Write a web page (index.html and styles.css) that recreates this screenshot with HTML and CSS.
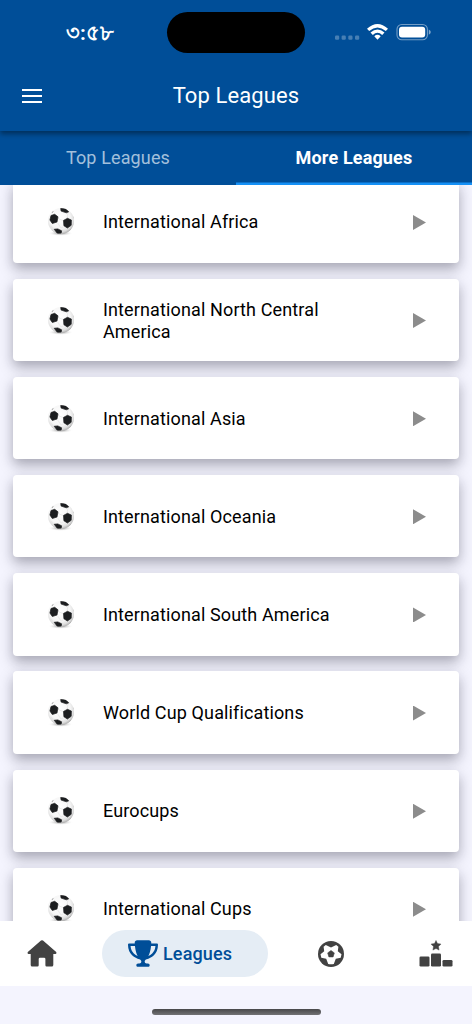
FILE: index.html
```html
<!DOCTYPE html>
<html lang="en">
<head>
<meta charset="utf-8">
<title>Top Leagues</title>
<link rel="stylesheet" href="styles.css">
</head>
<body>
<svg class="defs" width="0" height="0" aria-hidden="true">
  <defs>
    <radialGradient id="shade" cx=".45" cy=".38" r=".62">
      <stop offset="0" stop-color="#fff"/><stop offset=".65" stop-color="#f6f6f6"/><stop offset=".87" stop-color="#dedede"/><stop offset="1" stop-color="#b5b5b5"/>
    </radialGradient>
    <radialGradient id="ground"><stop offset="0" stop-color="#777"/><stop offset="1" stop-color="#fff" stop-opacity="0"/></radialGradient>
    <clipPath id="round"><circle cx="14" cy="14" r="13"/></clipPath>
  </defs>
  <symbol id="ball" viewBox="0 0 28 30">
    <ellipse cx="13.500" cy="26.300" rx="12.500" ry="2.700" fill="url(#ground)"/>
    <circle cx="14" cy="14" r="13" fill="url(#shade)"/>
    <g clip-path="url(#round)">
      <path d="M10 15l4 6M14 21l4-2M10 11l7 3M20 12l1-7M8 24l-4-5" stroke="#e4e4e4" stroke-width=".7" fill="none"/>
      <g fill="#1c1e20" stroke="#1c1e20" stroke-width=".7" stroke-linejoin="round">
        <path d="M13.700 1.400 18.500 1.800l3.200 3-2.400 1-5.200-1.700z"/>
        <path d="M4 8.500 7.700 7.300l3.300 2.500-1 5.200-4.700 1.500-2.400-3.500z"/>
        <path d="M16.500 13.400 20.500 11.300l3.900 1.800-.2 5.200-3.800 2.700-3.500-2.300z"/>
        <path d="M7.200 22.300l3.600-.4 3.800 1.900-.4 2.300-3.800.3z"/>
      </g>
      <path d="M4.500 5.500 6.500 3.800 6 5.500zM22.500 24l1.200-1.800 1.200-.8zM26 8l1.500 3-.6.500z" fill="#777"/>
    </g>
  </symbol>
</svg>
<div class="screen">
  <header class="header">
    <div class="status">
      <span class="time" lang="bn">৩:৫৮</span>
      <span class="island"></span>
      <svg class="signals" viewBox="0 0 98 24" fill="#fff">
        <g opacity=".28"><rect x="0" y="14.500" width="4.200" height="4.200" rx="1.200"/><rect x="6.600" y="14.500" width="4.200" height="4.200" rx="1.200"/><rect x="13.300" y="14.500" width="4.200" height="4.200" rx="1.200"/><rect x="20" y="14.500" width="4.200" height="4.200" rx="1.200"/></g>
        <path d="M32 7.800Q42.500-1.800 53 7.800l-2.200 2.200Q42.500 2.900 34.200 10zM35.500 11.600q7-6.400 14 0l-2.300 2.300q-4.700-4.100-9.400 0zM39.300 15.300q3.200-2.900 6.400 0L42.500 18.800z"/>
        <rect x="62" y="3.500" width="30.400" height="15.200" rx="4.800" fill="none" stroke="#fff" stroke-opacity=".45" stroke-width="1.100"/>
        <rect x="64" y="5.800" width="26.200" height="10.700" rx="3"/>
        <path d="M93.800 8.500q2 1 2 2.600t-2 2.600z" opacity=".5"/>
      </svg>
    </div>
    <div class="appbar">
      <svg class="menu" viewBox="0 0 20 14" fill="#fff"><path d="M0 0h20v2H0zM0 6h20v2H0zM0 12h20v2H0z"/></svg>
      <h1 class="title">Top Leagues</h1>
    </div>
  </header>
  <nav class="tabs">
    <span class="tab">Top Leagues</span>
    <span class="tab tab-active">More Leagues</span>
  </nav>
  <main class="list">
    <div class="card"><svg class="ball"><use href="#ball"/></svg><span class="name">International Africa</span><i class="arrow"></i></div>
    <div class="card"><svg class="ball"><use href="#ball"/></svg><span class="name">International North Central America</span><i class="arrow"></i></div>
    <div class="card"><svg class="ball"><use href="#ball"/></svg><span class="name">International Asia</span><i class="arrow"></i></div>
    <div class="card"><svg class="ball"><use href="#ball"/></svg><span class="name">International Oceania</span><i class="arrow"></i></div>
    <div class="card"><svg class="ball"><use href="#ball"/></svg><span class="name">International South America</span><i class="arrow"></i></div>
    <div class="card"><svg class="ball"><use href="#ball"/></svg><span class="name">World Cup Qualifications</span><i class="arrow"></i></div>
    <div class="card"><svg class="ball"><use href="#ball"/></svg><span class="name">Eurocups</span><i class="arrow"></i></div>
    <div class="card"><svg class="ball"><use href="#ball"/></svg><span class="name">International Cups</span><i class="arrow"></i></div>
  </main>
  <nav class="bottom">
    <svg class="home" viewBox="0 0 30 27" fill="#424242"><path d="M14 .6q1-.9 2 0L29.200 12q.7 1.600-.8 1.900H26.300V25q0 1.500-1.500 1.500H19.600q-1.200 0-1.200-1.300V19q0-1.300-1.300-1.300H13q-1.300 0-1.300 1.300v6.200q0 1.300-1.200 1.300H5.200Q3.700 26.500 3.700 25V13.900H1.600Q.1 13.600.8 12z"/></svg>
    <div class="pill">
      <svg class="cup" viewBox="0 0 576 512" fill="#004e98"><path d="M400 0H176c-26.500 0-48.100 21.800-47.100 48.200.2 5.300.4 10.600.7 15.800H24C10.700 64 0 74.700 0 88c0 92.600 33.500 157 78.500 200.700 44.300 43.100 98.300 64.800 138.100 75.800 23.400 6.500 39.400 26 39.400 45.600 0 20.900-17 37.900-37.900 37.900H192c-17.700 0-32 14.300-32 32s14.300 32 32 32h192c17.700 0 32-14.300 32-32s-14.300-32-32-32h-26.100C337 448 320 431 320 410.100c0-19.600 15.900-39.200 39.400-45.600 39.900-11 93.900-32.700 138.200-75.800C542.500 245 576 180.600 576 88c0-13.300-10.700-24-24-24H446.400c.3-5.200.5-10.400.7-15.800C448.100 21.800 426.500 0 400 0zM48.900 112h84.400c9.100 90.100 29.200 150.300 51.900 190.600-24.900-11-50.800-26.500-73.200-48.300-32-31.100-58-76-63.100-142.300zM464.100 254.300c-22.400 21.800-48.300 37.300-73.200 48.300 22.700-40.300 42.800-100.500 51.900-190.600h84.400c-5.100 66.300-31.100 111.200-63.100 142.300z"/></svg>
      <span class="pill-text">Leagues</span>
    </div>
    <svg class="soccer" viewBox="0 0 26 26"><circle cx="13" cy="13" r="13" fill="#424242"/><path d="M7.800 4 13 6.600 18.200 4l2.200 1.700-.6 4.500 3.700 3.100-.8 3.500-4.900.9-2 5.200q-2.800.9-5.600 0l-2-5.200-4.900-.9-.8-3.500 3.700-3.100-.6-4.500z" fill="#fff"/><path d="M13 9.500 16.300 11.900 15.100 15.900h-4.200L9.700 11.900z" fill="#424242" stroke="#424242" stroke-width=".6" stroke-linejoin="round"/></svg>
    <svg class="podium" viewBox="0 0 34 27" fill="#424242"><path d="M17 .4l1.500 3.200 3.500.5-2.500 2.500.6 3.500L17 8.500 13.900 10.100l.6-3.500L12 4.100l3.500-.5z" stroke="#424242" stroke-width=".4"/><rect x=".5" y="16.500" width="10" height="10" rx="1.300"/><rect x="12" y="13.500" width="10" height="13" rx="1.300"/><rect x="23.500" y="20" width="10" height="6.500" rx="1.300"/></svg>
  </nav>
  <footer class="foot"><span class="home-bar"></span></footer>
</div>
</body>
</html>
```
FILE: styles.css
```css
* { box-sizing: border-box; }
body { margin: 0; font-family: Roboto, "Noto Sans", sans-serif; background: #f4f4fe; }
.defs { position: absolute; }
.screen { display: flex; flex-direction: column; width: 472px; height: 1024px; overflow: hidden; background: #f4f4fe; }
.header { flex: 0 0 130.5px; background: #004e98; box-shadow: 0 3px 5px rgba(0, 0, 0, .4); z-index: 2; position: relative; }
.status { display: grid; grid-template-columns: 101px 138px 1fr; column-gap: 0; padding: 12px 0 0 66px; height: 62px; }
.time { color: #fff; font-size: 20.5px; font-weight: 700; line-height: 42px; white-space: nowrap; }
.island { width: 138px; height: 41px; border-radius: 21px; background: #000; }
.signals { width: 98px; height: 24px; margin: 9px 0 0 30px; }
.appbar { display: grid; grid-template-columns: 20px 1fr 20px; align-items: center; height: 68.5px; padding: 0 22px; }
.menu { width: 20px; height: 14px; }
.title { margin: 0; font-size: 22px; font-weight: 400; letter-spacing: .12px; color: #fff; text-align: center; line-height: 26px; }
.tabs { flex: 0 0 54.5px; display: grid; grid-template-columns: 1fr 1fr; background: #004e98; z-index: 1; }
.tab { display: flex; align-items: center; justify-content: center; padding-bottom: 1px; font-size: 18px; letter-spacing: .13px; color: #a3c0dc; }
.tab-active { color: #fff; font-weight: 700; letter-spacing: .15px; box-shadow: inset 0 -2.5px #1590f5; }
.list { flex: 0 0 736px; display: flex; flex-direction: column; gap: 15.8px; overflow: hidden; padding: 0 13px; }
.card { flex: 0 0 82.350px; display: grid; grid-template-columns: 28px 260px 1fr; align-items: center; padding: 1px 33px 0 34px; border-radius: 4px; background: #fff; box-shadow: 0 6px 13px rgba(20, 20, 40, .35); }
.card:first-child { margin-top: -4.300px; }
.ball { width: 28px; height: 30px; }
.name { margin-left: 28px; font-size: 18px; line-height: 22px; letter-spacing: .13px; color: #000; }
.arrow { justify-self: end; width: 13px; height: 15px; background: #8c8c8c; clip-path: polygon(0 0, 100% 50%, 0 100%); }
.bottom { flex: 0 0 65px; display: flex; align-items: center; padding: 0 19px 0 27px; background: #fff; }
.home { width: 30px; height: 27px; }
.pill { display: flex; align-items: center; width: 166px; height: 47px; margin-left: 45px; padding-left: 26px; border-radius: 24px; background: #e5edf5; }
.cup { width: 30px; height: 27px; }
.pill-text { margin-left: 5px; font-size: 18px; font-weight: 500; letter-spacing: .15px; color: #004e98; }
.soccer { width: 26px; height: 26px; margin-left: 50px; }
.podium { width: 34px; height: 27px; margin-left: 75px; }
.foot { flex: 1; display: flex; justify-content: center; padding-top: 23px; }
.home-bar { width: 169px; height: 6px; border-radius: 3px; background: linear-gradient(#48484a, #727275); }
```
